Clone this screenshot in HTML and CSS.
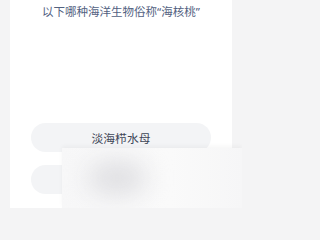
FILE: index.html
```html
<!DOCTYPE html>
<html lang="zh-CN">
<head>
<meta charset="utf-8">
<link rel="stylesheet" href="styles.css">
</head>
<body>
<div class="page">
  <div class="card">
    <div class="question">以下哪种海洋生物俗称“海核桃”</div>
    <div class="options">
      <div class="option">淡海栉水母</div>
      <div class="option"></div>
    </div>
  </div>
  <div class="overlay"><div class="blob"></div></div>
</div>
</body>
</html>
```
FILE: styles.css
```css
html, body {
  margin: 0;
  padding: 0;
  background: #f4f4f5;
  font-family: "Noto Sans", "Noto Sans CJK SC", sans-serif;
}
.page {
  position: relative;
  width: 242px;
  height: 208px;
  overflow: hidden;
  padding: 0 10px;
  box-sizing: border-box;
}
.card {
  background: #ffffff;
  height: 208px;
  display: flex;
  flex-direction: column;
}
.question {
  padding-top: 4px;
  font-size: 11.5px;
  line-height: 16px;
  color: #52617f;
  text-align: center;
}
.options {
  margin-top: 103px;
  padding: 0 21px;
  display: flex;
  flex-direction: column;
  gap: 13px;
}
.option {
  height: 29px;
  border-radius: 15px;
  background: #f3f4f6;
  display: flex;
  align-items: center;
  justify-content: center;
  font-size: 11.8px;
  color: #3e4657;
}
.overlay {
  position: absolute;
  left: 62px;
  top: 148px;
  right: 0;
  bottom: 0;
  background: linear-gradient(90deg, #f7f7f8 0%, #fafafa 60%, #f6f6f7 100%);
  box-shadow: 0 -2px 4px rgba(0,0,0,0.04);
  overflow: hidden;
}
.blob {
  position: absolute;
  left: 25px;
  top: 12px;
  width: 60px;
  height: 36px;
  border-radius: 50%;
  background: #e0e0e3;
  filter: blur(12px);
}
```
